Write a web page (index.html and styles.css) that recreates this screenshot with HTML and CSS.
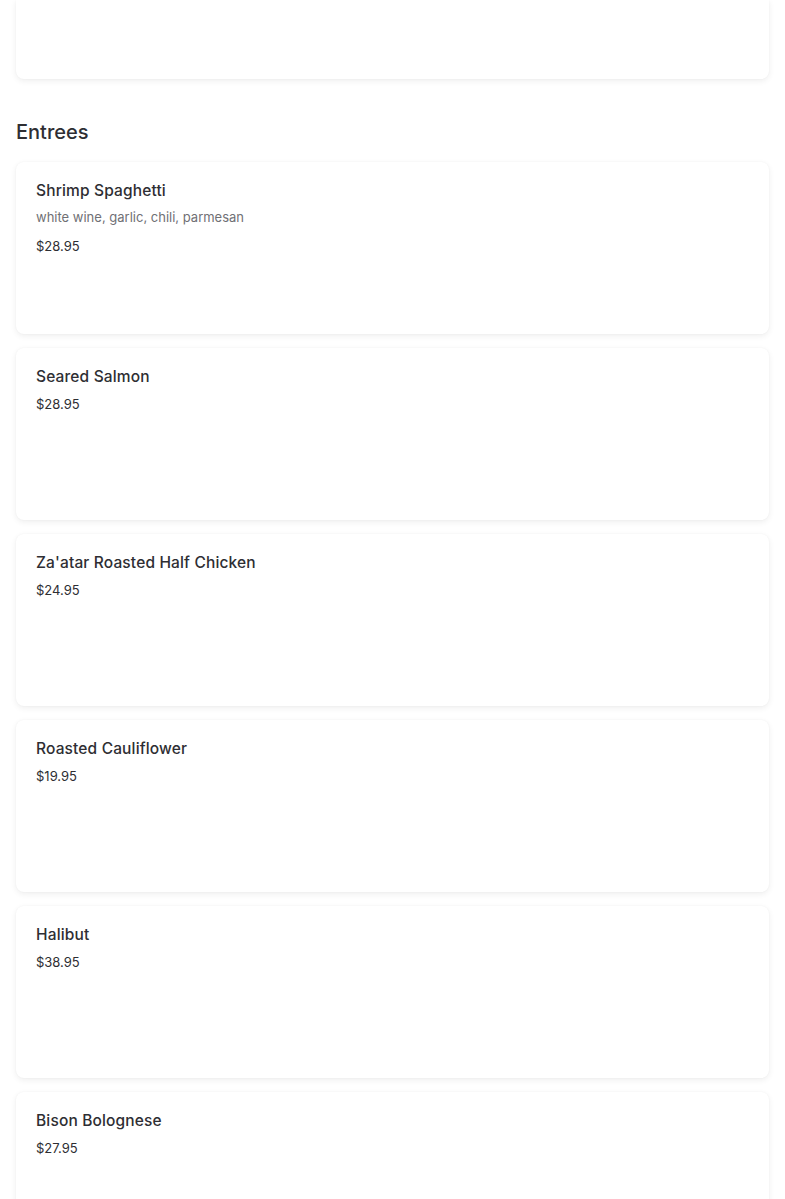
FILE: index.html
```html
<!DOCTYPE html>
<html lang="en">
<head>
<meta charset="utf-8">
<title>Menu</title>
<link rel="stylesheet" href="styles.css">
</head>
<body>
<main class="menu">
  <div class="card card-top"></div>
  <section class="section">
    <h2 class="section-title">Entrees</h2>
    <div class="list">
      <article class="card item">
        <h3 class="item-name">Shrimp Spaghetti</h3>
        <p class="item-desc">white wine, garlic, chili, parmesan</p>
        <p class="item-price">$28.95</p>
      </article>
      <article class="card item">
        <h3 class="item-name">Seared Salmon</h3>
        <p class="item-price">$28.95</p>
      </article>
      <article class="card item">
        <h3 class="item-name">Za'atar Roasted Half Chicken</h3>
        <p class="item-price">$24.95</p>
      </article>
      <article class="card item">
        <h3 class="item-name">Roasted Cauliflower</h3>
        <p class="item-price">$19.95</p>
      </article>
      <article class="card item">
        <h3 class="item-name">Halibut</h3>
        <p class="item-price">$38.95</p>
      </article>
      <article class="card item">
        <h3 class="item-name">Bison Bolognese</h3>
        <p class="item-price">$27.95</p>
      </article>
    </div>
  </section>
</main>
</body>
</html>
```

FILE: styles.css
```css
html, body {
  margin: 0;
  padding: 0;
  background: #ffffff;
}
body {
  font-family: "Inter", "Lato", "Liberation Sans", sans-serif;
  color: #2e2e33;
}
.menu {
  padding: 0 16px 40px;
}
.card {
  background: #ffffff;
  border-radius: 8px;
  box-shadow: 0 2px 6px rgba(0, 0, 0, 0.07), 0 0 2px rgba(0, 0, 0, 0.04);
}
.card-top {
  height: 79px;
  border-radius: 0 0 8px 8px;
}
.section-title {
  margin: 41px 0 18px;
  font-size: 20px;
  line-height: 24px;
  font-weight: 500;
  color: #2e2e33;
}
.list {
  display: flex;
  flex-direction: column;
  gap: 14px;
}
.item {
  box-sizing: border-box;
  height: 172px;
  padding: 19px 20px 18px;
}
.item-name {
  margin: 0;
  font-size: 15.5px;
  line-height: 20px;
  font-weight: 500;
  letter-spacing: 0.15px;
  color: #2e2e33;
}
.item-desc {
  margin: 6px 0 0;
  font-size: 13px;
  line-height: 20px;
  color: #707075;
}
.item-price {
  margin: 7px 0 0;
  font-size: 13px;
  line-height: 20px;
  color: #2e2e33;
}
.item-desc + .item-price {
  margin-top: 9px;
}
```
